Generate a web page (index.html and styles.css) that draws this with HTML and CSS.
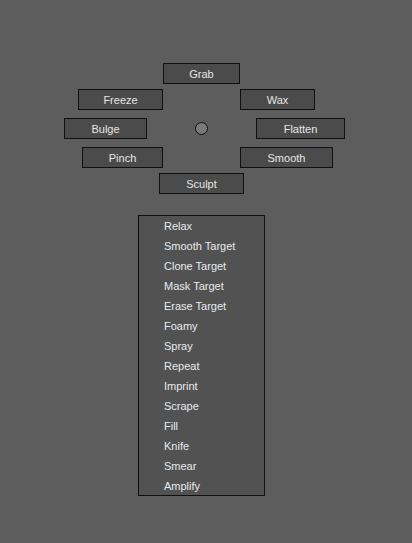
FILE: index.html
```html
<!DOCTYPE html>
<html>
<head>
<meta charset="utf-8">
<link rel="stylesheet" href="styles.css">
</head>
<body>
<div class="radial">
  <div class="rbtn b-grab">Grab</div>
  <div class="rbtn b-freeze">Freeze</div>
  <div class="rbtn b-wax">Wax</div>
  <div class="rbtn b-bulge">Bulge</div>
  <div class="center-dot"></div>
  <div class="rbtn b-flatten">Flatten</div>
  <div class="rbtn b-pinch">Pinch</div>
  <div class="rbtn b-smooth">Smooth</div>
  <div class="rbtn b-sculpt">Sculpt</div>
</div>
<ul class="menu">
  <li>Relax</li>
  <li>Smooth Target</li>
  <li>Clone Target</li>
  <li>Mask Target</li>
  <li>Erase Target</li>
  <li>Foamy</li>
  <li>Spray</li>
  <li>Repeat</li>
  <li>Imprint</li>
  <li>Scrape</li>
  <li>Fill</li>
  <li>Knife</li>
  <li>Smear</li>
  <li class="last">Amplify</li>
</ul>
</body>
</html>
```

FILE: styles.css
```css
html, body {
  margin: 0;
  padding: 0;
  background: #5d5d5d;
  width: 412px;
  height: 543px;
  overflow: hidden;
  font-family: "Liberation Sans", Arial, sans-serif;
  font-size: 11px;
}
.radial {
  position: relative;
  height: 215px;
}
.rbtn {
  position: absolute;
  box-sizing: border-box;
  height: 21px;
  border: 1px solid #101010;
  background: #4b4b4b;
  color: #e6e6e6;
  display: flex;
  align-items: center;
  justify-content: center;
}
.b-grab { left: 163px; top: 63px; width: 77px; }
.b-freeze { left: 78px; top: 89px; width: 85px; }
.b-wax { left: 240px; top: 89px; width: 75px; }
.b-bulge { left: 64px; top: 118px; width: 83px; }
.b-flatten { left: 256px; top: 118px; width: 89px; }
.b-pinch { left: 82px; top: 147px; width: 81px; }
.b-smooth { left: 240px; top: 147px; width: 93px; }
.b-sculpt { left: 159px; top: 173px; width: 85px; }
.center-dot {
  position: absolute;
  left: 195px;
  top: 122px;
  width: 13px;
  height: 13px;
  box-sizing: border-box;
  border-radius: 50%;
  border: 1px solid #101010;
  background: #7a7a7a;
}
.menu {
  list-style: none;
  margin: 0 0 0 138px;
  padding: 0;
  width: 125px;
  border: 1px solid #101010;
  background: #525252;
}
.menu li {
  height: 20px;
  line-height: 20px;
  padding-left: 25px;
  color: #e6eaf0;
}
.menu li.last {
  height: 19px;
}
```
